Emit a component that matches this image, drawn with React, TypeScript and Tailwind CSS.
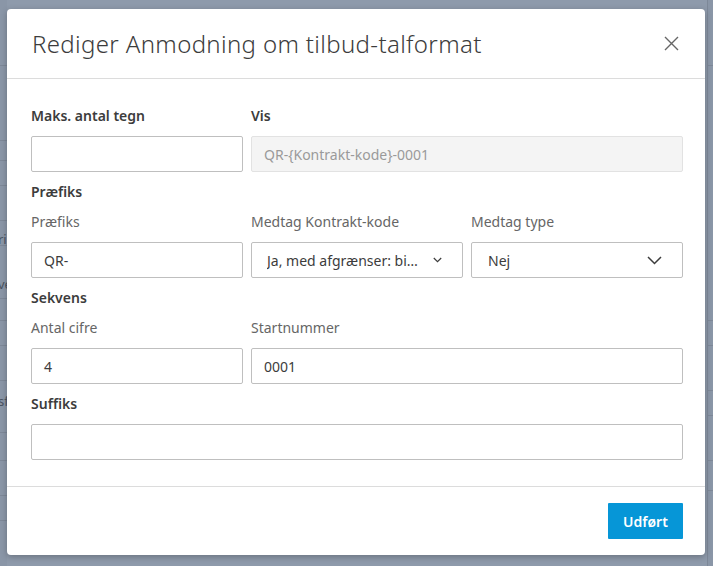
import React from "react";

const font = { fontFamily: '"Noto Sans", "Open Sans", Arial, sans-serif' };

function Chevron({ small }: { small?: boolean }) {
  if (small) {
    return (
      <svg width="9" height="6" viewBox="0 0 9 6" fill="none">
        <polyline points="0.8,1 4.5,4.7 8.2,1" stroke="#3c3c3c" strokeWidth="1.2" />
      </svg>
    );
  }
  return (
    <svg width="15" height="9" viewBox="0 0 15 9" fill="none">
      <polyline points="1,1 7.5,7.5 14,1" stroke="#3c3c3c" strokeWidth="1.5" />
    </svg>
  );
}

function Input({ value, disabled }: { value?: string; disabled?: boolean }) {
  return (
    <div
      className={
        disabled
          ? "h-9 w-full rounded-[2px] border border-[#e2e2e2] bg-[#f4f4f4] px-3 flex items-center text-[14px] text-[#9a9a9a]"
          : "h-9 w-full rounded-[2px] border border-[#bfbfbf] bg-white px-3 flex items-center text-[14px] text-[#3c3c3c]"
      }
    >
      {value}
    </div>
  );
}

function Select({ value, small }: { value: string; small?: boolean }) {
  return (
    <div
      className={
        small
          ? "h-9 w-full rounded-[2px] border border-[#bfbfbf] bg-white pl-[15px] pr-[20px] flex items-center justify-between text-[14px] text-[#3c3c3c]"
          : "h-9 w-full rounded-[2px] border border-[#bfbfbf] bg-white pl-4 pr-[20px] flex items-center justify-between text-[14px] text-[#3c3c3c]"
      }
    >
      <span className="whitespace-nowrap overflow-hidden">{value}</span>
      <Chevron small={small} />
    </div>
  );
}

const Heading = ({ children }: { children: React.ReactNode }) => (
  <div className="h-5 leading-5 text-[14px] font-semibold text-[#3c3c3c]">{children}</div>
);
const Sub = ({ children }: { children: React.ReactNode }) => (
  <div className="h-5 leading-5 text-[14px] text-[#666666]">{children}</div>
);

const rowsLeft = [65, 140, 160, 185, 220, 245, 298, 320, 345, 380, 432, 460, 495, 520];

export default function App() {
  return (
    <div className="relative w-[713px] h-[566px] overflow-hidden bg-[#8e9aab]" style={font}>
      {/* underlying page (dimmed) */}
      <div className="absolute left-0 top-0 w-[7px] h-full bg-[#8a96a7]">
        {rowsLeft.map((y) => (
          <div key={y} className="absolute left-0 w-full h-px bg-[#7d8898]" style={{ top: y }} />
        ))}
      </div>
      <div className="absolute left-[-2px] top-[230px] text-[13px] text-[#4a5361]">ri</div>
      <div className="absolute left-[-2px] top-[275px] text-[13px] text-[#4a5361]">ve</div>
      <div className="absolute left-[-2px] top-[392px] text-[13px] text-[#4a5361]">sf</div>
      <div className="absolute right-0 top-0 w-[6px] h-full border-l border-[#7d8898] bg-[#8a96a7]">
        {[65, 320, 345, 390, 415, 460, 490].map((y) => (
          <div key={y} className="absolute left-0 w-full h-px bg-[#7d8898]" style={{ top: y }} />
        ))}
      </div>

      {/* modal */}
      <div className="absolute left-[7px] top-[9px] w-[698px] h-[546px] bg-white rounded-[4px] shadow-[0_2px_6px_rgba(0,0,0,0.25)] flex flex-col">
        <div className="h-[70px] shrink-0 flex items-center justify-between pl-[25px] pr-[26px] border-b border-[#dcdcdc]">
          <div className="text-[24px] font-light text-[#3c3c3c] tracking-[0.35px]">
            Rediger Anmodning om tilbud-talformat
          </div>
          <svg width="15" height="15" viewBox="0 0 15 15" fill="none">
            <path d="M1 1 L14 14 M14 1 L1 14" stroke="#666666" strokeWidth="1.4" />
          </svg>
        </div>

        <div className="flex-1 pl-6 pr-[22px] pt-[27px] pb-[25px] flex flex-col gap-[10px]">
          <div className="grid grid-cols-3 gap-x-2 gap-y-[10px]">
            <Heading>Maks. antal tegn</Heading>
            <div className="col-span-2">
              <Heading>Vis</Heading>
            </div>
            <Input />
            <div className="col-span-2">
              <Input disabled value="QR-{Kontrakt-kode}-0001" />
            </div>
          </div>
          <Heading>Præfiks</Heading>
          <div className="grid grid-cols-3 gap-x-2 gap-y-[10px]">
            <Sub>Præfiks</Sub>
            <Sub>Medtag Kontrakt-kode</Sub>
            <Sub>Medtag type</Sub>
            <Input value="QR-" />
            <Select value="Ja, med afgrænser: bi…" small />
            <Select value="Nej" />
          </div>
          <Heading>Sekvens</Heading>
          <div className="grid grid-cols-3 gap-x-2 gap-y-[10px]">
            <Sub>Antal cifre</Sub>
            <div className="col-span-2">
              <Sub>Startnummer</Sub>
            </div>
            <Input value="4" />
            <div className="col-span-2">
              <Input value="0001" />
            </div>
          </div>
          <Heading>Suffiks</Heading>
          <Input />
        </div>

        <div className="h-[69px] shrink-0 border-t border-[#dcdcdc] flex items-center justify-end pr-[22px]">
          <button className="h-9 w-[75px] bg-[#0696d7] text-white text-[14px] font-semibold rounded-[1px]">
            Udført
          </button>
        </div>
      </div>
    </div>
  );
}
